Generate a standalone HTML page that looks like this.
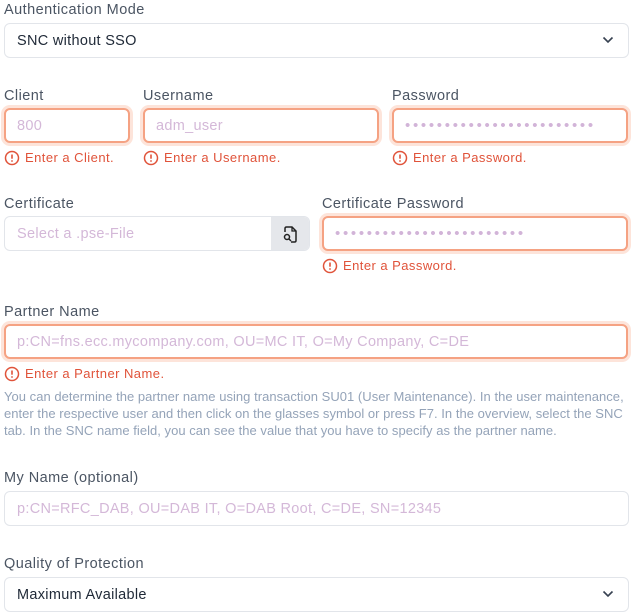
<!DOCTYPE html>
<html><head><style>
*{box-sizing:border-box;margin:0;padding:0}
body{width:634px;height:616px;background:#fff;font-family:"Liberation Sans",sans-serif;position:relative;overflow:hidden}
.l{position:absolute;font-size:14.5px;color:#4b5563;line-height:16px;letter-spacing:0.45px;margin-top:1px}
.i{position:absolute;height:35px;border:1px solid #e2e5ea;border-radius:6px;font-size:14.5px;color:#d4b8d8;padding-left:12px;line-height:34px;background:#fff;letter-spacing:0.3px;white-space:nowrap}
.e{border:2px solid #f5a283;box-shadow:0 0 0 3px #fde4da;padding-left:11px;line-height:32px}
.s{color:#1f2937}
.er{position:absolute;font-size:13px;color:#e0533a;line-height:16px;white-space:nowrap;letter-spacing:0.45px}
.er svg{position:absolute;left:0;top:0}
.er span{margin-left:21px}
.dots{letter-spacing:2.7px;font-size:15px;color:#d2b4d8}
.h{position:absolute;left:4px;font-size:13px;color:#94a3b8;line-height:17px;white-space:nowrap;letter-spacing:0.03px}
.chev{position:absolute;right:14px;top:12px}
</style></head><body>
<div class="l" style="left:4px;top:1px">Authentication Mode</div>
<div class="i s" style="left:4px;top:23px;width:625px">SNC without SSO<svg class="chev" width="12" height="8" viewBox="0 0 12 8"><path d="M1.5 1.5L6 6l4.5-4.5" fill="none" stroke="#374151" stroke-width="1.6"/></svg></div>

<div class="l" style="left:4px;top:87px">Client</div>
<div class="l" style="left:143px;top:87px">Username</div>
<div class="l" style="left:392px;top:87px">Password</div>
<div class="i e" style="left:4px;top:108px;width:126px">800</div>
<div class="i e" style="left:143px;top:108px;width:236px">adm_user</div>
<div class="i e dots" style="left:392px;top:108px;width:236px">••••••••••••••••••••••••</div>
<div class="er" style="left:4px;top:150px"><svg width="16" height="16" viewBox="0 0 16 16"><circle cx="8" cy="8" r="6.5" fill="none" stroke="#e0533a" stroke-width="1.5"/><path d="M8 4.5v4.2" stroke="#e0533a" stroke-width="1.6"/><circle cx="8" cy="11" r="0.9" fill="#e0533a"/></svg><span>Enter a Client.</span></div>
<div class="er" style="left:143px;top:150px"><svg width="16" height="16" viewBox="0 0 16 16"><circle cx="8" cy="8" r="6.5" fill="none" stroke="#e0533a" stroke-width="1.5"/><path d="M8 4.5v4.2" stroke="#e0533a" stroke-width="1.6"/><circle cx="8" cy="11" r="0.9" fill="#e0533a"/></svg><span>Enter a Username.</span></div>
<div class="er" style="left:392px;top:150px"><svg width="16" height="16" viewBox="0 0 16 16"><circle cx="8" cy="8" r="6.5" fill="none" stroke="#e0533a" stroke-width="1.5"/><path d="M8 4.5v4.2" stroke="#e0533a" stroke-width="1.6"/><circle cx="8" cy="11" r="0.9" fill="#e0533a"/></svg><span>Enter a Password.</span></div>

<div class="l" style="left:4px;top:195px">Certificate</div>
<div class="l" style="left:322px;top:195px">Certificate Password</div>
<div class="i" style="left:4px;top:216px;width:306px;overflow:hidden">Select a .pse-File<div style="position:absolute;right:0;top:0;width:38px;height:33px;background:#e5e7eb"><svg style="position:absolute;left:11px;top:8px" width="16" height="18" viewBox="0 0 16 18"><path d="M3 7V3.5Q3 2 4.5 2H10l4 4v9.5Q14 17 12.5 17H9" fill="none" stroke="#222" stroke-width="1.5"/><path d="M10 2v4h4" fill="none" stroke="#222" stroke-width="1.3"/><circle cx="5" cy="12" r="2.5" fill="none" stroke="#222" stroke-width="1.5"/><path d="M7 14l2 2" stroke="#222" stroke-width="1.5"/></svg></div></div>
<div class="i e dots" style="left:322px;top:216px;width:306px">••••••••••••••••••••••••</div>
<div class="er" style="left:322px;top:258px"><svg width="16" height="16" viewBox="0 0 16 16"><circle cx="8" cy="8" r="6.5" fill="none" stroke="#e0533a" stroke-width="1.5"/><path d="M8 4.5v4.2" stroke="#e0533a" stroke-width="1.6"/><circle cx="8" cy="11" r="0.9" fill="#e0533a"/></svg><span>Enter a Password.</span></div>

<div class="l" style="left:4px;top:303px">Partner Name</div>
<div class="i e" style="left:4px;top:324px;width:624px">p:CN=fns.ecc.mycompany.com, OU=MC IT, O=My Company, C=DE</div>
<div class="er" style="left:4px;top:366px"><svg width="16" height="16" viewBox="0 0 16 16"><circle cx="8" cy="8" r="6.5" fill="none" stroke="#e0533a" stroke-width="1.5"/><path d="M8 4.5v4.2" stroke="#e0533a" stroke-width="1.6"/><circle cx="8" cy="11" r="0.9" fill="#e0533a"/></svg><span>Enter a Partner Name.</span></div>
<div class="h" style="top:388px">You can determine the partner name using transaction SU01 (User Maintenance). In the user maintenance,</div>
<div class="h" style="top:405px">enter the respective user and then click on the glasses symbol or press F7. In the overview, select the SNC</div>
<div class="h" style="top:422px">tab. In the SNC name field, you can see the value that you have to specify as the partner name.</div>

<div class="l" style="left:4px;top:469px">My Name (optional)</div>
<div class="i" style="left:4px;top:491px;width:625px">p:CN=RFC_DAB, OU=DAB IT, O=DAB Root, C=DE, SN=12345</div>

<div class="l" style="left:4px;top:555px">Quality of Protection</div>
<div class="i s" style="left:4px;top:577px;width:625px">Maximum Available<svg class="chev" width="12" height="8" viewBox="0 0 12 8"><path d="M1.5 1.5L6 6l4.5-4.5" fill="none" stroke="#374151" stroke-width="1.6"/></svg></div>
</body></html>
